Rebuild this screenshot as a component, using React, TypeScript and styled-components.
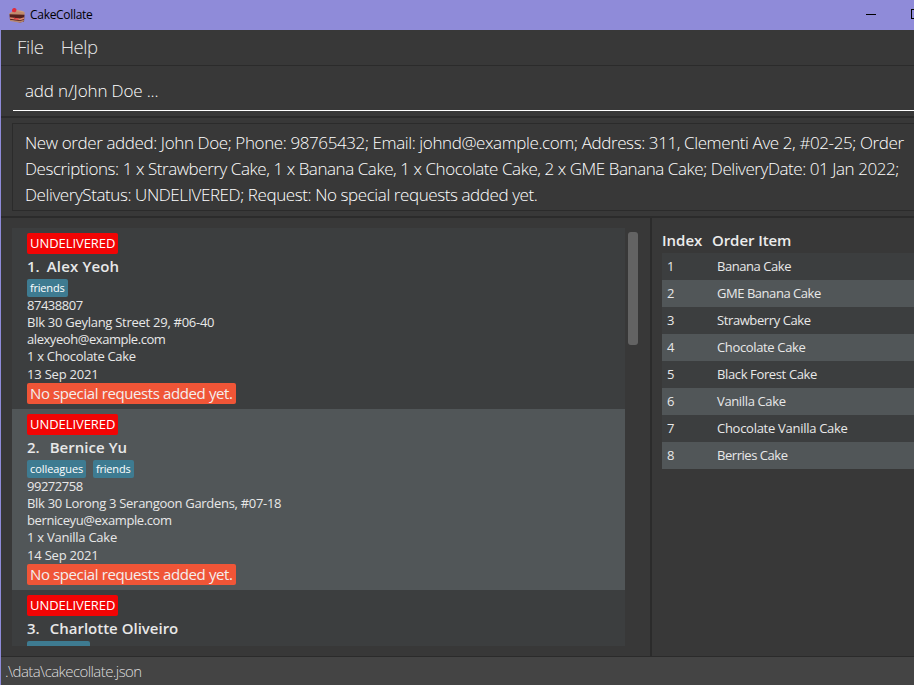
import React from 'react';
import styled, { createGlobalStyle } from 'styled-components';

const GlobalStyle = createGlobalStyle`
  *, *::before, *::after { box-sizing: border-box; }
  html, body, #root { height: 100%; }
  body {
    margin: 0;
    overflow: hidden;
    background: #383838;
    font-family: "Open Sans", "Noto Sans", sans-serif;
  }
`;

/* Text with adjustable tracking, in px */
const Text = styled.span<{ $track?: number }>`
  letter-spacing: ${(p) => p.$track ?? 0}px;
  white-space: pre;
`;

const Window = styled.div`
  display: flex;
  flex-direction: column;
  width: 914px;
  height: 685px;
  overflow: hidden;
`;

const TitleBar = styled.header`
  display: flex;
  flex: none;
  align-items: center;
  height: 30px;
  padding: 0 0 1px 9px;
  background: #8f8bd9;
  color: #000;
  font-size: 12px;
`;

const CakeIcon = styled.svg`
  width: 16px;
  height: 16px;
  margin-right: 5px;
`;

const WindowButtons = styled.div`
  display: flex;
  gap: 34px;
  margin: 0 -8px 0 auto;
`;

const WindowGlyph = styled.svg`
  width: 11px;
  height: 11px;
`;

const Body = styled.div`
  display: flex;
  flex: 1;
  flex-direction: column;
  min-height: 0;
  border-left: 1px solid #8f8bd9;
`;

const MenuBar = styled.nav`
  display: flex;
  flex: none;
  gap: 17px;
  height: 36px;
  padding-left: 16px;
  border-bottom: 1px solid #2b2b2b;
  color: #e8e8e8;
  font-size: 18.5px;
  font-weight: 300;
  line-height: 34px;
`;

const CommandPane = styled.div`
  flex: none;
  height: 52px;
  padding: 6px 0 0 12px;
  border-bottom: 2px solid #2b2b2b;
`;

const CommandField = styled.div`
  height: 39px;
  padding-left: 12px;
  border-bottom: 1px solid #fff;
  color: #fff;
  font-size: 17px;
  font-weight: 300;
  line-height: 38px;
`;

const ResultPane = styled.div`
  flex: none;
  height: 100px;
  padding: 5px 0 5px 11px;
  border-bottom: 2px solid #2b2b2b;
`;

const ResultBox = styled.div`
  display: flex;
  flex-direction: column;
  height: 88px;
  padding: 6px 0 0 12px;
  border: 1px solid #2b2b2b;
  border-right: 0;
  color: #fff;
  font-size: 17px;
  font-weight: 300;
  line-height: 26px;
`;

const Split = styled.main`
  display: flex;
  flex: 1;
  min-height: 0;
`;

const OrderPane = styled.section`
  display: flex;
  flex: none;
  gap: 3px;
  width: 651px;
  padding: 10px 12px 10px 11px;
  border-right: 2px solid #2b2b2b;
`;

const OrderList = styled.div`
  flex: none;
  width: 613px;
  height: 418px;
  overflow: hidden;
`;

const ScrollThumb = styled.div`
  flex: none;
  width: 10px;
  height: 113px;
  margin-top: 4px;
  border-radius: 3px;
  background: #636363;
`;

const OrderCard = styled.article<{ $alt: boolean }>`
  display: flex;
  flex-direction: column;
  align-items: flex-start;
  height: 181px;
  padding: 5px 0 0 15px;
  background: ${(p) => (p.$alt ? '#515658' : '#3c3e3f')};
  color: #e8e8e8;
`;

const StatusBadge = styled.div`
  width: 91px;
  height: 21px;
  padding-left: 3px;
  border-radius: 2px;
  background: #f20404;
  color: #fff;
  font-size: 13px;
  line-height: 20px;
`;

const NameRow = styled.div<{ $gap: number }>`
  display: flex;
  gap: ${(p) => p.$gap}px;
  height: 25px;
  font-size: 15px;
  font-weight: 600;
  line-height: 25px;
`;

const TagRow = styled.div`
  display: flex;
  gap: 7px;
  height: 18px;
`;

const Tag = styled.span<{ $width: number }>`
  width: ${(p) => p.$width}px;
  padding-left: 3px;
  border-radius: 2px;
  background: #3e7b91;
  color: #fff;
  font-size: 11px;
  line-height: 17px;
`;

const Detail = styled.div`
  height: 17px;
  font-size: 13px;
  line-height: 17px;
`;

const DateLine = styled(Detail)`
  height: 18px;
  line-height: 19px;
`;

const RequestNote = styled.div`
  width: 209px;
  height: 21px;
  padding-left: 3px;
  border-radius: 2px;
  background: #f05537;
  color: #f4eeee;
  font-size: 15px;
  line-height: 21px;
`;

const ItemPane = styled.section`
  flex: 1;
  padding: 10px 0 0 10px;
`;

const ItemHeader = styled.div`
  display: grid;
  grid-template-columns: 50px 1fr;
  height: 25px;
  color: #ececec;
  font-size: 15px;
  font-weight: 600;
  line-height: 25px;
`;

const ItemRow = styled.div<{ $alt: boolean }>`
  display: grid;
  grid-template-columns: 50px 1fr;
  height: 27px;
  padding-left: 5px;
  background: ${(p) => (p.$alt ? '#515658' : '#3c3e3f')};
  color: #e8e8e8;
  font-size: 13px;
  line-height: 27px;
`;

const StatusBar = styled.footer`
  flex: none;
  height: 29px;
  padding-left: 4px;
  border-top: 1px solid #2b2b2b;
  background: #444;
  color: #dedede;
  font-size: 15px;
  font-weight: 300;
  line-height: 28px;
`;

type Line = [text: string, track: number];

interface Order {
  index: string;
  name: Line;
  gap: number;
  tags: { label: string; width: number; track: number }[];
  details: Line[];
  date?: string;
  request?: string;
}

const orders: Order[] = [
  {
    index: '1.',
    name: ['Alex Yeoh', 0.17],
    gap: 7,
    tags: [{ label: 'friends', width: 41, track: -0.2 }],
    details: [
      ['87438807', -0.48],
      ['Blk 30 Geylang Street 29, #06-40', -0.27],
      ['alexyeoh@example.com', -0.44],
      ['1 x Chocolate Cake', -0.31],
    ],
    date: '13 Sep 2021',
    request: 'No special requests added yet.',
  },
  {
    index: '2.',
    name: ['Bernice Yu', 0.03],
    gap: 10,
    tags: [
      { label: 'colleagues', width: 59, track: -0.07 },
      { label: 'friends', width: 41, track: -0.2 },
    ],
    details: [
      ['99272758', -0.48],
      ['Blk 30 Lorong 3 Serangoon Gardens, #07-18', -0.3],
      ['berniceyu@example.com', -0.39],
      ['1 x Vanilla Cake', -0.25],
    ],
    date: '14 Sep 2021',
    request: 'No special requests added yet.',
  },
  {
    index: '3.',
    name: ['Charlotte Oliveiro', 0],
    gap: 10,
    tags: [{ label: '', width: 63, track: 0 }],
    details: [],
  },
];

const items: Line[] = [
  ['Banana Cake', -0.45],
  ['GME Banana Cake', -0.46],
  ['Strawberry Cake', -0.4],
  ['Chocolate Cake', -0.35],
  ['Black Forest Cake', -0.37],
  ['Vanilla Cake', -0.36],
  ['Chocolate Vanilla Cake', -0.28],
  ['Berries Cake', -0.46],
];

const result: Line[] = [
  ['New order added: John Doe; Phone: 98765432; Email: johnd@example.com; Address: 311, Clementi Ave 2, #02-25; Order', -0.393],
  ['Descriptions: 1 x Strawberry Cake, 1 x Banana Cake, 1 x Chocolate Cake, 2 x GME Banana Cake; DeliveryDate: 01 Jan 2022;', -0.44],
  ['DeliveryStatus: UNDELIVERED; Request: No special requests added yet.', -0.41],
];

function Cake() {
  return (
    <CakeIcon viewBox="0 0 16 16">
      <path d="M0.5 6.5 6 2.5 13.5 4 15.5 5 15 8 0.5 8Z" fill="#c99b80" />
      <path d="M0.5 6.5 6 4 15.5 5.5 15.5 8 0.5 7.5Z" fill="#c08a6c" />
      <path d="M0.5 7.2 15.5 7.8 15 14.5 11 15.5 1 13Z" fill="#54201c" />
      <path d="M0.8 10.2 11 11.4 15.2 10.2 15.2 12 11 13.2 0.8 11.8Z" fill="#d98a70" />
      <path d="M1 12.8 11 14 15 12.8 14.6 14.4 11 15.7 1 14Z" fill="#b98872" />
      <path d="M3.2 4.8C2.4 2.5 4 .6 6.2 1.2 8.2 1.8 7.6 4.6 5.8 5.3Z" fill="#e02c3c" />
      <path d="M5 11.4 9.5 12.4" stroke="#e23b3f" strokeWidth="1.2" />
    </CakeIcon>
  );
}

export default function App() {
  return (
    <>
      <GlobalStyle />
      <Window>
        <TitleBar>
          <Cake />
          <Text $track={-0.3}>CakeCollate</Text>
          <WindowButtons>
            <WindowGlyph viewBox="0 0 11 11">
              <path d="M0 5.5H10" stroke="#000" />
            </WindowGlyph>
            <WindowGlyph viewBox="0 0 11 11">
              <rect x="0.5" y="0.5" width="9" height="9" fill="none" stroke="#000" />
            </WindowGlyph>
          </WindowButtons>
        </TitleBar>
        <Body>
          <MenuBar>
            <Text $track={-0.3}>File</Text>
            <Text $track={-0.4}>Help</Text>
          </MenuBar>
          <CommandPane>
            <CommandField>
              <Text $track={-0.145}>add n/John Doe ...</Text>
            </CommandField>
          </CommandPane>
          <ResultPane>
            <ResultBox>
              {result.map(([text, track]) => (
                <Text key={text} $track={track}>{text}</Text>
              ))}
            </ResultBox>
          </ResultPane>
          <Split>
            <OrderPane>
              <OrderList>
                {orders.map((order, i) => (
                  <OrderCard key={order.index} $alt={i % 2 === 1}>
                    <StatusBadge>
                      <Text $track={-0.06}>UNDELIVERED</Text>
                    </StatusBadge>
                    <NameRow $gap={order.gap}>
                      <Text>{order.index}</Text>
                      <Text $track={order.name[1]}>{order.name[0]}</Text>
                    </NameRow>
                    <TagRow>
                      {order.tags.map((tag) => (
                        <Tag key={tag.label} $width={tag.width}>
                          <Text $track={tag.track}>{tag.label}</Text>
                        </Tag>
                      ))}
                    </TagRow>
                    {order.details.map(([text, track]) => (
                      <Detail key={text}>
                        <Text $track={track}>{text}</Text>
                      </Detail>
                    ))}
                    {order.date && (
                      <DateLine>
                        <Text $track={-0.2}>{order.date}</Text>
                      </DateLine>
                    )}
                    {order.request && (
                      <RequestNote>
                        <Text $track={-0.39}>{order.request}</Text>
                      </RequestNote>
                    )}
                  </OrderCard>
                ))}
              </OrderList>
              <ScrollThumb />
            </OrderPane>
            <ItemPane>
              <ItemHeader>
                <Text>Index</Text>
                <Text $track={-0.08}>Order Item</Text>
              </ItemHeader>
              {items.map(([text, track], i) => (
                <ItemRow key={text} $alt={i % 2 === 1}>
                  <Text>{i + 1}</Text>
                  <Text $track={track}>{text}</Text>
                </ItemRow>
              ))}
            </ItemPane>
          </Split>
          <StatusBar>
            <Text $track={-0.57}>.\data\cakecollate.json</Text>
          </StatusBar>
        </Body>
      </Window>
    </>
  );
}
